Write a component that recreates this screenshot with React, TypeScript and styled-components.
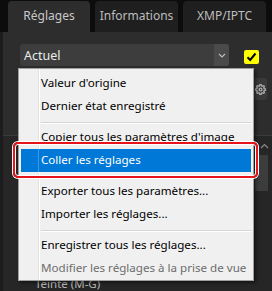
import React from "react";
import styled, { createGlobalStyle } from "styled-components";

const Global = createGlobalStyle`
  html, body { margin: 0; padding: 0; background: #0c0c0c; }
  body { font-family: "Noto Sans", "Open Sans", sans-serif; }
`;

const Screen = styled.div`
  position: relative;
  width: 272px;
  height: 291px;
  overflow: hidden;
  background: #0c0c0c;
  display: flex;
  flex-direction: column;
  font-family: "Noto Sans", sans-serif;
`;

const TabBar = styled.div`
  display: flex;
  align-items: flex-end;
  gap: 5px;
  height: 32px;
  padding-left: 8px;
  box-sizing: border-box;
`;

const Tab = styled.div<{ $active?: boolean; $w: number }>`
  width: ${(p) => p.$w}px;
  height: 31px;
  box-sizing: border-box;
  border-radius: 4px 4px 0 0;
  background: ${(p) => (p.$active ? "#2d2d2d" : "#1f1f1f")};
  color: ${(p) => (p.$active ? "#c9c9c9" : "#bdbdbd")};
  font-size: 12px;
  display: flex;
  align-items: center;
  justify-content: center;
  padding-bottom: 2px;
`;

const Panel = styled.div`
  flex: 1;
  background: #2d2d2d;
  border-left: 3px solid #1c1c1c;
  display: flex;
  flex-direction: column;
  min-height: 0;
`;

const SelectRow = styled.div`
  display: flex;
  align-items: center;
  padding: 12px 0 0 17px;
  height: 34px;
  box-sizing: border-box;
`;

const Select = styled.div`
  width: 209px;
  height: 22px;
  border-radius: 3px;
  background: #3d3d3d;
  display: flex;
  align-items: center;
  overflow: hidden;
`;

const SelectText = styled.span`
  flex: 1;
  color: #ececec;
  font-size: 12.5px;
  padding-left: 4px;
`;

const SelectArrow = styled.div`
  width: 15px;
  height: 100%;
  background: #4a4a4a;
  display: flex;
  align-items: center;
  justify-content: center;
`;

const Check = styled.div`
  width: 15px;
  height: 14px;
  margin-left: 15px;
  margin-top: 3px;
  background: #ffff00;
  border-radius: 2px;
  display: flex;
  align-items: center;
  justify-content: center;
`;

const ToolRow = styled.div`
  display: flex;
  justify-content: flex-end;
  padding: 12px 5px 0 0;
  height: 34px;
  box-sizing: border-box;
`;

const ToolButton = styled.div`
  width: 13px;
  height: 22px;
  border-radius: 3px;
  background: #3a3a3a;
  display: flex;
  align-items: center;
  justify-content: center;
`;

const SectionHeader = styled.div`
  margin-top: 35px;
  height: 19px;
  border-top: 1px solid #3a3a3a;
  background: #262626;
  display: flex;
  justify-content: flex-end;
  align-items: center;
  padding-right: 3px;
`;

const SectionBody = styled.div`
  flex: 1;
  background: #262626;
  display: flex;
  flex-direction: column;
`;

const SliderBlock = styled.div`
  align-self: flex-end;
  width: 13px;
  height: 36px;
  margin-right: 4px;
  background: #3c3c3c;
`;

const FieldLabel = styled.div`
  margin-top: auto;
  padding-left: 32px;
  color: #b9b9b9;
  font-size: 11.5px;
  line-height: 14px;
  height: 14px;
`;

const Menu = styled.div`
  position: absolute;
  left: 18px;
  top: 68px;
  width: 236px;
  height: 213px;
  box-sizing: border-box;
  border: 1px solid #a0a0a0;
  padding: 3px 2px 0;
  background: linear-gradient(
    to right,
    #f0f0f0 19px,
    #e2e2e2 19px,
    #e2e2e2 20px,
    #ffffff 20px,
    #ffffff 21px,
    #f0f0f0 21px
  );
  box-shadow: 2px 2px 3px rgba(0, 0, 0, 0.45);
  font-family: "Noto Sans", sans-serif;
`;

const Item = styled.div<{ $active?: boolean; $disabled?: boolean }>`
  height: 23px;
  display: flex;
  align-items: stretch;
  font-size: 11.6px;
  line-height: 21px;
  color: ${(p) => (p.$active ? "#ffffff" : p.$disabled ? "#6d6d6d" : "#000000")};
  background: ${(p) => (p.$active ? "#0078d7" : "transparent")};
  white-space: nowrap;
`;

const Gutter = styled.span<{ $active?: boolean }>`
  width: 17px;
  flex: none;
  border-right: 1px solid ${(p) => (p.$active ? "rgba(255,255,255,0.25)" : "transparent")};
`;

const Label = styled.span`
  padding-left: 2px;
`;

const Separator = styled.div<{ $hidden?: boolean }>`
  height: 8px;
  display: flex;
  align-items: center;
  padding-left: 20px;
  &::after {
    content: "";
    flex: 1;
    height: 1px;
    background: ${(p) => (p.$hidden ? "transparent" : "#d5d5d5")};
    border-bottom: 1px solid ${(p) => (p.$hidden ? "transparent" : "#ffffff")};
    margin-top: 1px;
  }
`;

const Callout = styled.div`
  position: absolute;
  left: 13px;
  top: 142px;
  width: 245px;
  height: 36px;
  box-sizing: border-box;
  border: 2px solid #e6131b;
  border-radius: 5px;
  box-shadow: 0 0 0 1px #ffffff, inset 0 0 0 1px #ffffff;
  pointer-events: none;
`;

type Entry =
  | { kind: "item"; text: string; active?: boolean; disabled?: boolean }
  | { kind: "sep"; hidden?: boolean };

const entries: Entry[] = [
  { kind: "item", text: "Valeur d'origine" },
  { kind: "item", text: "Dernier état enregistré" },
  { kind: "sep" },
  { kind: "item", text: "Copier tous les paramètres d'image" },
  { kind: "item", text: "Coller les réglages", active: true },
  { kind: "sep", hidden: true },
  { kind: "item", text: "Exporter tous les paramètres..." },
  { kind: "item", text: "Importer les réglages..." },
  { kind: "sep" },
  { kind: "item", text: "Enregistrer tous les réglages..." },
  { kind: "item", text: "Modifier les réglages à la prise de vue", disabled: true },
];

export default function App() {
  return (
    <>
      <Global />
      <Screen>
        <TabBar>
          <Tab $active $w={82}>Réglages</Tab>
          <Tab $w={83}>Informations</Tab>
          <Tab $w={83}>XMP/IPTC</Tab>
        </TabBar>
        <Panel>
          <SelectRow>
            <Select>
              <SelectText>Actuel</SelectText>
              <SelectArrow>
                <svg width="8" height="5" viewBox="0 0 8 5">
                  <path d="M1 1 L4 4 L7 1" fill="none" stroke="#bdbdbd" strokeWidth="1.1" />
                </svg>
              </SelectArrow>
            </Select>
            <Check>
              <svg width="11" height="10" viewBox="0 0 11 10">
                <path d="M1.5 5.2 L4.2 8 L9.5 1.5" fill="none" stroke="#000" strokeWidth="2" />
              </svg>
            </Check>
          </SelectRow>
          <ToolRow>
            <ToolButton>
              <svg width="11" height="11" viewBox="0 0 24 24" fill="none" stroke="#a8a8a8" strokeWidth="3">
                <circle cx="12" cy="12" r="3" />
                <path d="M19.4 15a1.65 1.65 0 0 0 .33 1.82l.06.06a2 2 0 1 1-2.830 2.830l-.06-.06a1.65 1.65 0 0 0-1.820-.33 1.65 1.65 0 0 0-1 1.51V21a2 2 0 0 1-4 0v-.09A1.65 1.65 0 0 0 9 19.4a1.65 1.65 0 0 0-1.820.33l-.06.06a2 2 0 1 1-2.830-2.830l.06-.06A1.65 1.65 0 0 0 4.6 15a1.65 1.65 0 0 0-1.510-1H3a2 2 0 0 1 0-4h.09A1.65 1.65 0 0 0 4.6 9a1.65 1.65 0 0 0-.33-1.820l-.06-.06a2 2 0 1 1 2.830-2.830l.06.06A1.65 1.65 0 0 0 9 4.6a1.65 1.65 0 0 0 1-1.510V3a2 2 0 0 1 4 0v.09a1.65 1.65 0 0 0 1 1.510 1.65 1.65 0 0 0 1.820-.33l.06-.06a2 2 0 1 1 2.830 2.830l-.06.06A1.65 1.65 0 0 0 19.4 9a1.65 1.65 0 0 0 1.510 1H21a2 2 0 0 1 0 4h-.09a1.65 1.65 0 0 0-1.510 1z" />
              </svg>
            </ToolButton>
          </ToolRow>
          <SectionHeader>
            <svg width="9" height="6" viewBox="0 0 9 6">
              <path d="M1 5 L4.5 1.5 L8 5" fill="none" stroke="#8a8a8a" strokeWidth="1.2" />
            </svg>
          </SectionHeader>
          <SectionBody>
            <SliderBlock />
            <FieldLabel>Teinte (M-G)</FieldLabel>
          </SectionBody>
        </Panel>

        <Menu>
          {entries.map((e, i) =>
            e.kind === "sep" ? (
              <Separator key={i} $hidden={e.hidden} />
            ) : (
              <Item key={i} $active={e.active} $disabled={e.disabled}>
                <Gutter $active={e.active} />
                <Label>{e.text}</Label>
              </Item>
            )
          )}
        </Menu>
        <Callout />
      </Screen>
    </>
  );
}
